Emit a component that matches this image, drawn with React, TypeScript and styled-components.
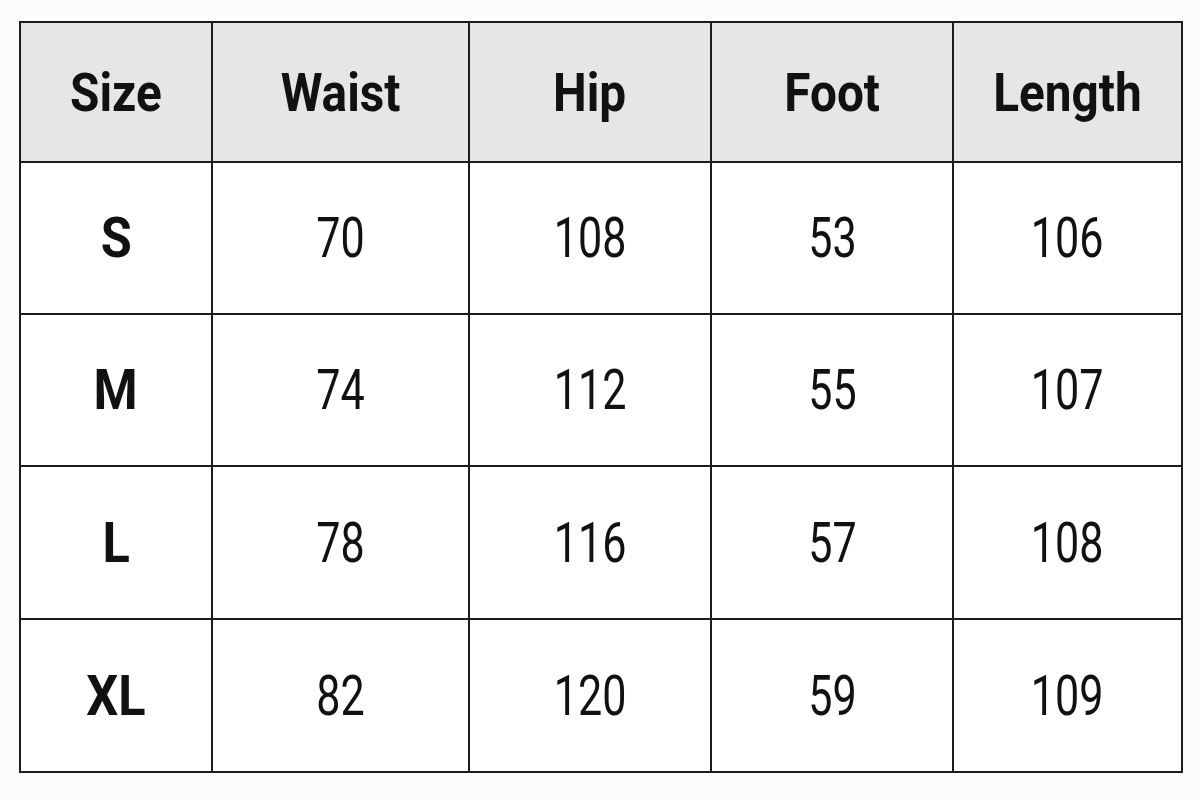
import styled, { createGlobalStyle } from 'styled-components';

const GlobalStyle = createGlobalStyle`
  html, body {
    margin: 0;
    padding: 0;
    background: #fcfcfc;
  }

  body {
    font-family: Roboto, "Liberation Sans", Arial, sans-serif;
    color: #111;
  }
`;

const columns = [
  { key: 'size', label: 'Size', width: 192 },
  { key: 'waist', label: 'Waist', width: 257 },
  { key: 'hip', label: 'Hip', width: 242 },
  { key: 'foot', label: 'Foot', width: 242 },
  { key: 'length', label: 'Length', width: 229 },
];

const rows = [
  { size: 'S', values: ['70', '108', '53', '106'] },
  { size: 'M', values: ['74', '112', '55', '107'] },
  { size: 'L', values: ['78', '116', '57', '108'] },
  { size: 'XL', values: ['82', '120', '59', '109'] },
];

/** size chart */
export default function App() {
  return (
    <>
      <GlobalStyle />
      <Page>
        <ChartTable>
          <colgroup>
            {columns.map((col) => (
              <col key={col.key} style={{ width: col.width }} />
            ))}
          </colgroup>
          <thead>
            <HeadRow>
              {columns.map((col) => (
                <HeadCell key={col.key}>
                  <HeadText>{col.label}</HeadText>
                </HeadCell>
              ))}
            </HeadRow>
          </thead>
          <tbody>
            {rows.map((row, i) => (
              <BodyRow key={row.size} $tall={i >= 2}>
                <BodyCell>
                  <SizeText>{row.size}</SizeText>
                </BodyCell>
                {row.values.map((v, j) => (
                  <BodyCell key={j}>
                    <NumberText>{v}</NumberText>
                  </BodyCell>
                ))}
              </BodyRow>
            ))}
          </tbody>
        </ChartTable>
      </Page>
    </>
  );
}

const Page = styled.div`
  width: 1200px;
  height: 800px;
  padding: 21px 0 0 19px;
  box-sizing: border-box;
`;

const ChartTable = styled.table`
  width: 1164px;
  table-layout: fixed;
  border-collapse: collapse;
  border: 2px solid #1c1c1c;
`;

const HeadRow = styled.tr`
  height: 140px;
  background-color: #e6e6e6;
`;

const BodyRow = styled.tr<{ $tall: boolean }>`
  height: ${({ $tall }) => ($tall ? 153 : 152)}px;
  background-color: #fff;
`;

const cellBase = `
  padding: 0;
  border: 2px solid #1c1c1c;
  text-align: center;
  vertical-align: middle;
`;

const HeadCell = styled.th`
  ${cellBase}
`;

const BodyCell = styled.td`
  ${cellBase}
`;

const HeadText = styled.span`
  display: inline-block;
  padding-top: 2px;
  font-size: 53px;
  font-weight: 700;
  transform: scaleX(0.9);
`;

const SizeText = styled.span`
  display: inline-block;
  font-size: 56px;
  font-weight: 700;
  transform: scaleX(0.9);
`;

const NumberText = styled.span`
  display: inline-block;
  font-size: 56px;
  font-weight: 400;
  transform: scaleX(0.77);
`;
